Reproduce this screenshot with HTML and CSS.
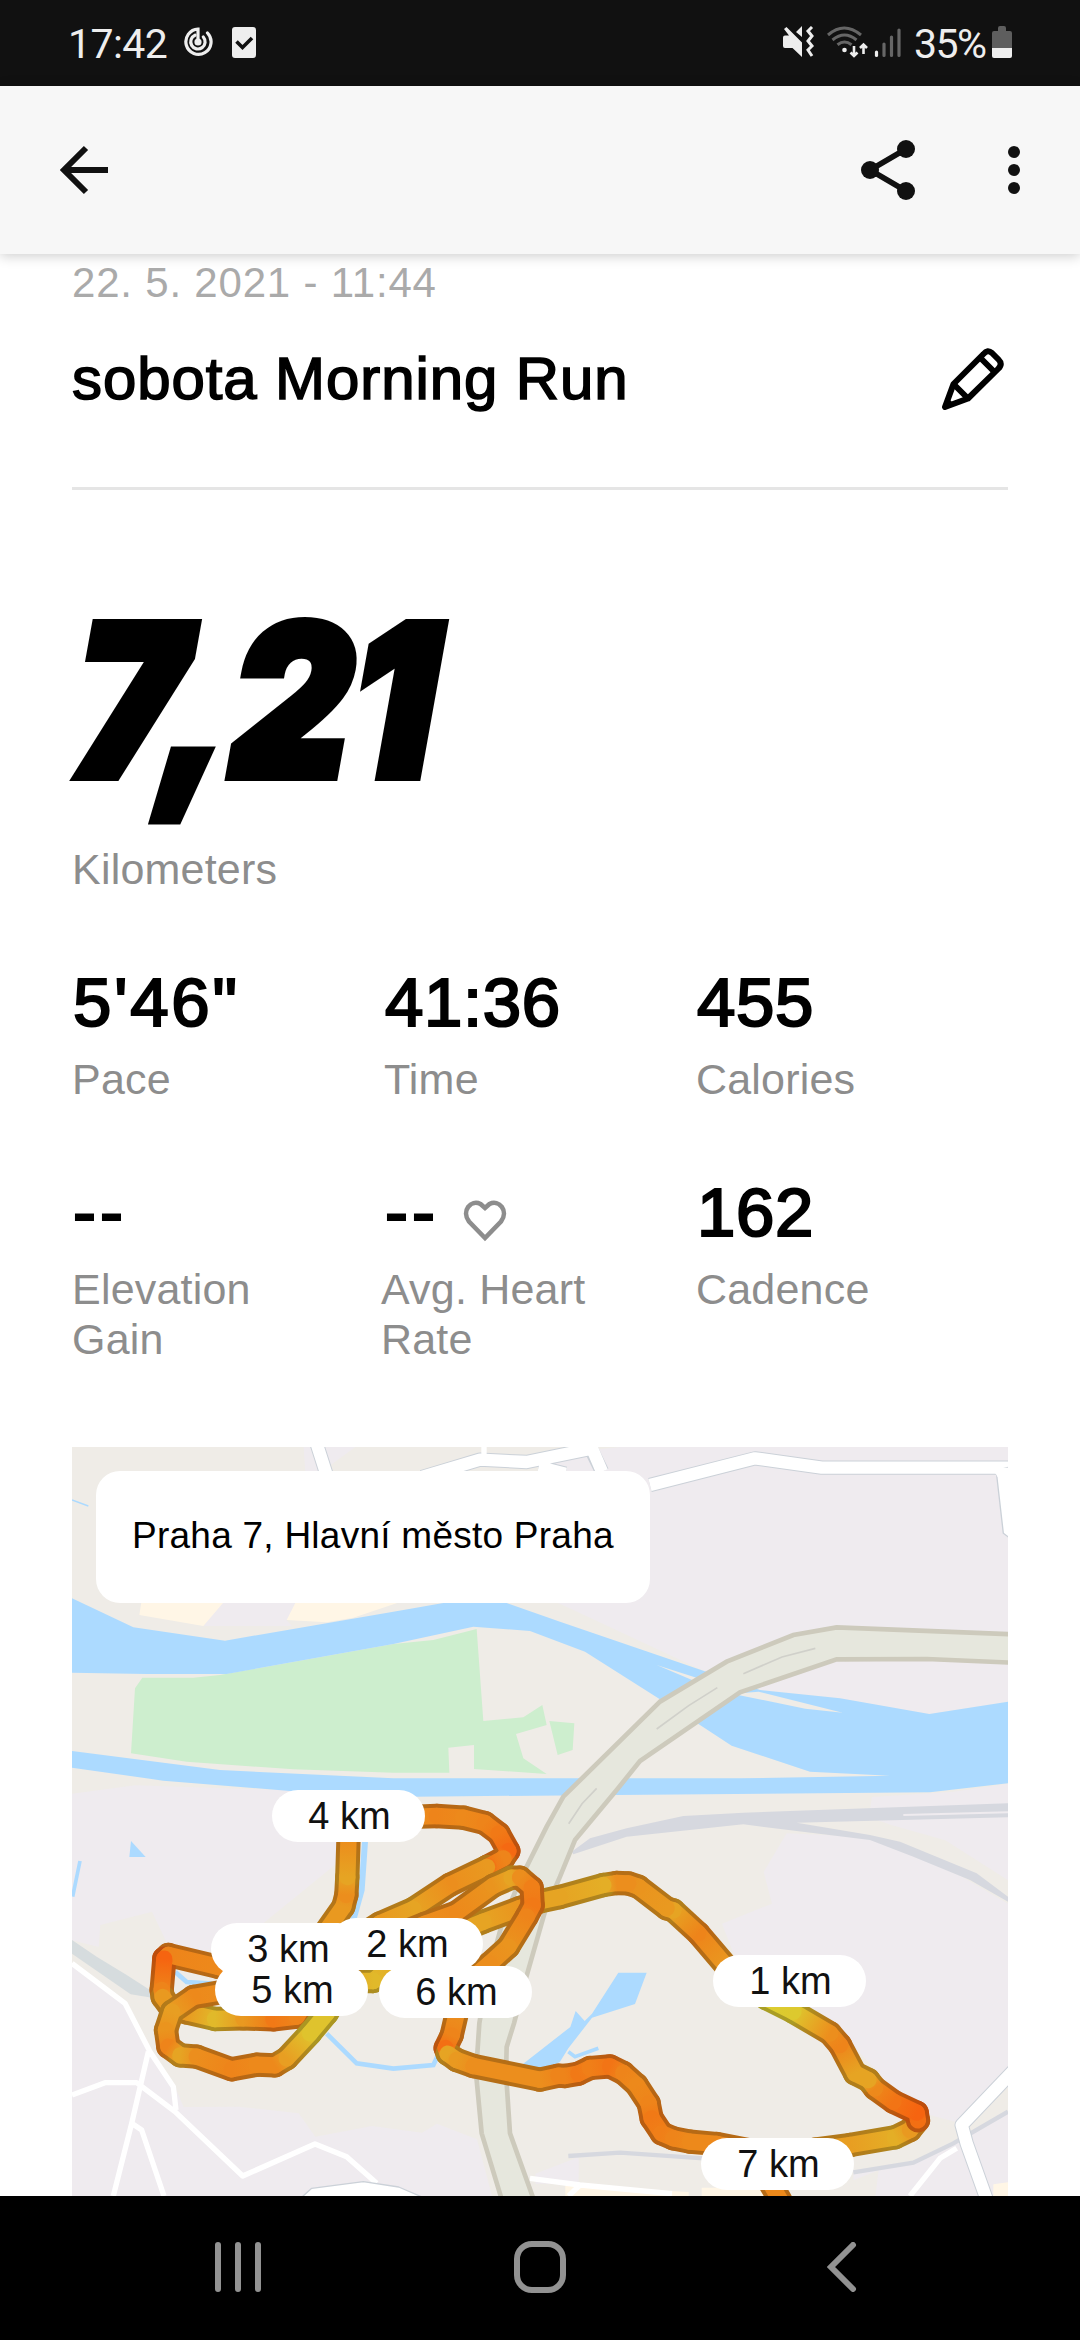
FILE: index.html
```html
<!DOCTYPE html>
<html lang="cs">
  <head>
    <meta charset="UTF-8">
    <title>sobota Morning Run</title>
    <link rel="stylesheet" href="styles.css">
  </head>

  <body>
    <div class="status-bar">
      <span class="time">17:42</span>
      <svg class="icon-record" width="30" height="30" viewBox="0 0 30 30" fill="none" stroke="#eee" stroke-width="3.2" stroke-linecap="round">
        <path d="M15 15V2.200A12.600 12.600 0 1 0 24.500 6"/>
        <path d="M12 8.200A7.200 7.200 0 1 0 20.300 10"/>
        <circle cx="15" cy="15" r="2" fill="#eee"/>
      </svg>
      <svg class="icon-check" width="24" height="31" viewBox="0 0 24 31">
        <rect width="24" height="31" rx="3" fill="#eee"/>
        <path d="M4.500 14.500l6 6L20 11" fill="none" stroke="#111" stroke-width="3.6"/>
      </svg>

      <div class="status-right">
        <svg width="32" height="32" viewBox="0 0 32 32">
          <path d="M0 11.500q0-2 2-2H6L1 3 3.500 1 19 16.500V31L9.500 22H2q-2 0-2-2zM13 6l6-6v11z" fill="#eee"/>
          <path d="M29 1l-4 4 4 5-4 5 4 5-4 4 4 6" fill="none" stroke="#eee" stroke-width="3"/>
        </svg>
        <svg class="icon-wifi" width="42" height="32" viewBox="0 0 42 32" fill="none">
          <g stroke="#666" stroke-width="3">
            <path d="M1 9q16-14 33 0"/>
            <path d="M5.500 14q12-10 24 0"/>
            <path d="M10.500 18.800q7-5.500 14 0"/>
          </g>
          <circle cx="17.500" cy="24" r="2.300" fill="#eee"/>
          <path d="M27 20v10m-3.500-3.500L27 30l3.500-3.500M36.500 28V18.500M33 22l3.500-3.500L40 22" stroke="#eee" stroke-width="2.600"/>
        </svg>
        <svg class="icon-signal" width="28" height="32" viewBox="0 0 28 32" stroke-width="3.200" stroke-linecap="round">
          <path d="M2.500 26v3.500" stroke="#eee"/>
          <path d="M10 18v11.500M17.500 11v18.500M25 4v25.500" stroke="#666"/>
        </svg>
        <span class="percent">35%</span>
        <svg width="20" height="32" viewBox="0 0 20 32">
          <path d="M0 7q0-2 2-2h4V2q0-2 2-2h4q2 0 2 2v3h4q2 0 2 2v15H0z" fill="#5e5e5e"/>
          <path d="M0 22h20v8q0 2-2 2H2q-2 0-2-2z" fill="#eee"/>
        </svg>
      </div>
    </div>

    <div class="app-bar">
      <svg width="49" height="50" viewBox="0 0 49 50" fill="none" stroke="#111" stroke-width="6">
        <path d="M48 25H5M26 3L4 25l22 22"/>
      </svg>
      <div class="actions">
        <svg width="54" height="62" viewBox="0 0 54 62" fill="#111">
          <path d="M45 10L9 31l36 21" fill="none" stroke="#111" stroke-width="5.500"/>
          <circle cx="9" cy="31" r="9"/>
          <circle cx="45" cy="10" r="9"/>
          <circle cx="45" cy="52" r="9"/>
        </svg>
        <svg width="12" height="48" viewBox="0 0 12 48" fill="#111">
          <circle cx="6" cy="6" r="6"/>
          <circle cx="6" cy="24" r="6"/>
          <circle cx="6" cy="42" r="6"/>
        </svg>
      </div>
    </div>

    <div class="content">
      <div class="date">22. 5. 2021 - 11:44</div>
      <div class="title-row">
        <h1>sobota Morning Run</h1>
        <svg width="62" height="62" viewBox="0 0 62 62" fill="none" stroke="#000" stroke-width="6" stroke-linejoin="round">
          <path d="M3 59L11.500 36 41.500 6Q45.500 1 50 5L56.500 11.500Q61 16 56 21L26 50.500z"/>
          <path d="M38 9.500L52.500 24M11.500 36L26 50.500"/>
          <path d="M3 59l3-9 6 6z" fill="#000" stroke="none"/>
        </svg>
      </div>

      <div class="distance">7,21</div>
      <div class="label">Kilometers</div>

      <div class="stats">
        <div class="stat">
          <div class="value pace">5'46"</div>
          <div class="label">Pace</div>
        </div>
        <div class="stat">
          <div class="value">41:36</div>
          <div class="label">Time</div>
        </div>
        <div class="stat">
          <div class="value">455</div>
          <div class="label">Calories</div>
        </div>
        <div class="stat">
          <div class="value empty">--</div>
          <div class="label">Elevation<br>Gain</div>
        </div>
        <div class="stat">
          <div class="value empty">--
            <svg class="heart" width="44" height="42" viewBox="0 0 44 42" fill="none" stroke="#8d8d8d" stroke-width="4.600">
              <path d="M22 38L6 21.500C-2 11 8 -1 17.500 4L22 8l4.500-4C36 -1 46 11 38 21.500z"/>
            </svg>
          </div>
          <div class="label heart-label">Avg. Heart<br>Rate</div>
        </div>
        <div class="stat">
          <div class="value">162</div>
          <div class="label">Cadence</div>
        </div>
      </div>

      <div class="map">
        <svg width="936" height="749" viewBox="0 0 2808 2247">
          <rect width="2808" height="2247" fill="#efece7"/>

          <!-- built-up areas -->
          <g fill="#efebef">
            <path d="M1644 0H2808V764L2572 801 2304 754 2064 729 1894 671 1504 489 1440 460 1380 300 1440 20z"/>
            <path d="M695 0H850L740 80H700zM454 460H700L644 520 660 537H394z"/>
            <path d="M0 1040L190 1015 660 1030 870 1160 830 1220 560 1440 350 1540 300 1520 240 1394 85 1434 80 1500 0 1480z"/>
            <path d="M0 1549L155 1670 234 1814 300 1900 335 1980 500 1979 680 1999 730 2069 900 2037 1050 2057 1095 2030 1215 2077 1260 2247H0z"/>
            <path d="M2400 1050L2644 1034 2808 1010V1300L2620 1180 2460 1135 2390 1110z"/>
            <path d="M2144 1159L2400 1170 2520 1200 2808 1370V1870L2670 2030 2560 2000 2440 1900 2300 1750 2000 1560 1950 1430 2100 1370 2075 1275z"/>
            <path d="M2344 2176L2524 2147 2644 2089 2808 1994V2247H2410L2420 2170 2344 2200z"/>
            <path d="M1390 2180L1520 2130V2210H1390z"/>
          </g>

          <g fill="#fff6e6">
            <path d="M209 460H460L394 537 202 504zM674 460H1000L844 512 764 526 644 519z"/>
            <path d="M1480 2215L1850 2235V2247H1480zM1889 2222H2090V2247H1889zM2764 2212L2808 2206V2247H2764z"/>
          </g>

          <path d="M211 692H364L444 684 964 591 1084 579 1214 546 1234 822 1354 811 1411 774 1424 834 1332 861 1354 934 1424 981 1206 966V894L1129 902 1132 977H964L664 967 344 944 177 919 189 724zM1432 822L1507 829 1502 909 1457 924z" fill="#cdeece"/>

          <!-- river, canal and ponds -->
          <g fill="#acdaff">
            <path d="M0 454L184 541 459 581 964 494 1114 468H1304L1464 524 1894 671 2064 729 2304 754 2572 801 2808 764V1009L2574 1036 1634 1044 1024 1049 654 1032 274 1001 0 962V912L444 969 964 994H2004L2454 986 2214 974 1979 896 1884 834 1759 754 1539 614 1374 552 1204 539 964 591 464 681H224L0 677z"/>
            <path d="M177 1182L221 1230H172z"/>
            <path d="M1639 1577H1724L1689 1671 1560 1712 1489 1804 1464 1844 1420 1870 1349 1854 1495 1740 1511 1692 1538 1722 1560 1700z"/>
          </g>
          <path d="M1754 654L1885 696 1862 700zM1980 740L2060 734 2312 797 2200 785z" fill="#efece7"/>
          <g fill="none" stroke="#acdaff">
            <path d="M24 1242L2 1349M1489 1814L1509 1829 1579 1804" stroke-width="11"/>
            <path d="M0 159L49 177" stroke-width="4"/>
            <path d="M879 1184L869 1329 844 1419" stroke-width="18"/>
            <path d="M310 1575L344 1605 420 1610M764 1760L854 1849 964 1865 1084 1854 1110 1800" stroke-width="14"/>
          </g>

          <!-- railways -->
          <path d="M0 1479L74 1529 164 1584 234 1629 240 1652 176 1642 0 1520z" fill="#d6dcde"/>
          <path d="M1499 1214L1554 1174 1664 1144 1834 1107 2014 1097 2808 1069V1111L2174 1127 2394 1164 2484 1184 2714 1279 2808 1349V1364L2694 1299 2524 1229 2394 1179 2014 1132 1664 1169 1504 1222z" fill="#d6d8df"/>
          <path d="M2494 1104L2808 1096" fill="none" stroke="#efebef" stroke-width="6"/>
          <path d="M1489 2127L1644 2117 1894 2134M2344 2176L2524 2147 2644 2089 2808 1994" fill="none" stroke="#d6d8df" stroke-width="13"/>

          <!-- streets: grey casing, then white -->
          <g fill="none" stroke-linejoin="round">
            <path d="M1050 90L1224 38 1364 45 1554 6M1554 0L1590 74M1400 60L1480 80M1734 114L2049 34 2249 62H2808M734 -10L766 90M2830 1865L2669 2034 2684 2089 2745 2260" stroke="#cbd1d8" stroke-width="43"/>
            <path d="M1050 90L1224 38 1364 45 1554 6M1554 -10L1590 74M1400 60L1480 80M1734 114L2049 34 2249 62H2808M734 -10L766 90M2830 1865L2669 2034 2684 2089 2745 2260" stroke="#fff" stroke-width="37"/>
            <path d="M1236 0V30M0 1549L159 1669 234 1814 304 1919 312 1989M0 1944L99 1907H194L309 1994 512 2187 729 2091 824 2129 914 2209M229 1814L179 2029 124 2247M179 2029L209 2049 276 2247M2654 2104L2604 2134 2514 2247M1374 2194L1524 2214 1800 2240M1524 2214L1490 2247" stroke="#fff" stroke-width="16"/>
            <path d="M2774 84L2794 259 2812 272V60L2774 70zM690 2250L719 2224 874 2204 980 2220 1050 2250z" fill="#fff" stroke="#cbd1d8" stroke-width="4"/>
            <path d="M2760 62H2808V90H2777z" fill="#fff"/>
          </g>

          <!-- motorway -->
          <path d="M2820 562L2294 541 2164 564 1964 644 1764 764 1474 1049 1424 1139 1344 1299 1290 1430 1244 1600 1222 1729 1212 1879 1229 2059 1290 2260H1386L1314 2059 1302 1879 1304 1800 1326 1729 1360 1600 1420 1390 1464 1289 1509 1179 1634 1029 1704 942 2004 736 2294 637 2564 636 2820 647z" fill="#e6e7dd" stroke="#cdcabc" stroke-width="14"/>
          <path d="M2230 604L2130 630 2014 680M1936 722L1850 776 1754 846M1574 1024L1530 1070 1490 1130" fill="none" stroke="#d0d0ca" stroke-width="5"/>

          <g id="route"></g>
        </svg>

        <div class="place">Praha 7, Hlavní město Praha</div>
        <div class="km km-1">1 km</div>
        <div class="km km-3">3 km</div>
        <div class="km km-2">2 km</div>
        <div class="km km-4">4 km</div>
        <div class="km km-5">5 km</div>
        <div class="km km-6">6 km</div>
        <div class="km km-7">7 km</div>
      </div>
    </div>

    <div class="nav-bar">
      <svg width="48" height="50" viewBox="0 0 48 50" stroke="#929292" stroke-width="6" stroke-linecap="round">
        <path d="M4 3v44M24 3v44M44 3v44"/>
      </svg>
      <svg class="home" width="52" height="52" viewBox="0 0 52 52" fill="none" stroke="#929292" stroke-width="6">
        <rect x="3" y="3" width="46" height="46" rx="15"/>
      </svg>
      <svg width="30" height="50" viewBox="0 0 30 50" fill="none" stroke="#929292" stroke-width="6" stroke-linecap="round">
        <path d="M26 3L4 25l22 22"/>
      </svg>
    </div>

    <script src="route.js"></script>
  </body>
</html>
```
FILE: styles.css
```css
body {
  margin: 0;
  width: 1080px;
  height: 2340px;
  overflow: hidden;
  display: flex;
  flex-direction: column;
  background: #fff;
  color: #000;
  font-family: "Liberation Sans", Arial, sans-serif;
}

svg {
  display: block;
  flex: none;
}

.status-bar {
  box-sizing: border-box;
  flex: none;
  height: 86px;
  padding: 0 68px 2px 68px;
  display: flex;
  align-items: center;
  background: #111;
  color: #eee;
  font-family: Roboto, sans-serif;
  font-size: 41px;
}

.time {
  width: 115px;
  padding-top: 4px;
  letter-spacing: -0.6px;
}

.icon-check {
  margin-left: 19px;
}

.status-right {
  margin-left: auto;
  display: flex;
  align-items: center;
}

.icon-wifi {
  margin-left: 12px;
}

.icon-signal {
  margin-left: 5px;
}

.percent {
  width: 78px;
  margin-left: 12px;
  padding-top: 4px;
  letter-spacing: -1.6px;
}

.app-bar {
  box-sizing: border-box;
  flex: none;
  height: 168px;
  padding: 0 60px;
  display: flex;
  align-items: center;
  justify-content: space-between;
  background: #f7f7f7;
  box-shadow: 0 2px 12px rgba(0, 0, 0, 0.2);
}

.actions {
  display: flex;
  align-items: center;
  gap: 93px;
}

.content {
  box-sizing: border-box;
  flex: none;
  height: 1942px;
  padding: 9px 72px 0;
}

.date {
  line-height: 40px;
  font-size: 42px;
  color: #aaa;
  letter-spacing: 0.8px;
}

.title-row {
  display: flex;
  align-items: center;
  justify-content: space-between;
  margin-top: 41px;
  padding: 0 4px 73px 0;
  border-bottom: 3px solid #e5e5e5;
}

.title-row h1 {
  margin: 0;
  font-size: 60px;
  line-height: 70px;
  font-weight: normal;
  letter-spacing: 0.9px;
  -webkit-text-stroke: 1.6px #000;
}

.distance {
  margin: 130px 0 0 -6px;
  padding-left: 10px;
  font-family: Inter, sans-serif;
  font-size: 209px;
  line-height: 160px;
  font-weight: 900;
  font-style: italic;
  -webkit-text-stroke: 10px #000;
  transform: scaleX(0.89) skewX(-2deg);
  transform-origin: left;
}

.label {
  font-size: 43px;
  line-height: 50px;
  letter-spacing: 0.2px;
  color: #8d8d8d;
}

.distance + .label {
  margin-top: 64px;
}

.stats {
  display: grid;
  grid-template-columns: repeat(3, 312px);
  row-gap: 69px;
  margin-top: 69px;
}

.value {
  display: flex;
  align-items: center;
  margin: 0 0 11px 1px;
  font-size: 69px;
  line-height: 80px;
  letter-spacing: 0.6px;
  -webkit-text-stroke: 2.2px #000;
}

.pace {
  letter-spacing: 2.8px;
}

.empty {
  letter-spacing: 4px;
}

.heart {
  margin: 16px 0 0 24px;
}

.heart-label {
  margin-left: -3px;
}

.map {
  position: relative;
  height: 749px;
  margin-top: 83px;
  overflow: hidden;
}

.place {
  position: absolute;
  left: 24px;
  top: 24px;
  box-sizing: border-box;
  width: 554px;
  height: 132px;
  padding-left: 36px;
  border-radius: 24px;
  background: #fff;
  font-size: 37px;
  line-height: 129px;
  letter-spacing: 0.25px;
  white-space: nowrap;
}

.km {
  position: absolute;
  width: 153px;
  height: 52px;
  border-radius: 26px;
  background: #fff;
  color: #111;
  font-size: 38px;
  line-height: 53px;
  text-align: center;
  text-indent: 2px;
}

.km-1 { left: 641px; top: 508px; }
.km-2 { left: 258px; top: 471px; }
.km-3 { left: 139px; top: 476px; }
.km-4 { left: 200px; top: 343px; }
.km-5 { left: 143px; top: 517px; }
.km-6 { left: 307px; top: 519px; }
.km-7 { left: 629px; top: 691px; }

.nav-bar {
  box-sizing: border-box;
  flex: none;
  height: 144px;
  padding: 0 0 2px 214px;
  display: flex;
  align-items: center;
  background: #000;
}

.home {
  margin: 0 261px 0 252px;
}
```
FILE: route.js
```javascript
// every point is x, y, speed (0 = slow/red, 1 = fast/yellow)
const parts = [
  // start -> 1 km -> 2 km
  [[2125, 2260, .35], [2084, 2190, .35], [2064, 2140, .4], [2230, 2108, .5], [2334, 2094, .55], [2469, 2071, .7], [2514, 2049, .5], [2538, 2020, .45]],
  [[2538, 2020, .1], [2534, 1997, 0], [2464, 1964, .15], [2409, 1924, .35], [2389, 1899, .6], [2349, 1879, .6], [2304, 1794, .3], [2274, 1759, .4], [2164, 1694, .95], [2084, 1654, 1], [1964, 1559, .5], [1879, 1459, .3], [1804, 1390, .6], [1784, 1384, .5], [1699, 1319, .45], [1669, 1309, .4], [1634, 1308, .4], [1594, 1314, .7], [1464, 1350, .6], [1404, 1363, .6], [1344, 1383, .45], [1234, 1424, .6], [1000, 1520, .6], [904, 1602, .8], [824, 1602, .6]],
  // western loop, 3 km
  [[820, 1560, .5], [480, 1570, .35], [440, 1560, .35], [289, 1524, .3], [277, 1535, 0], [269, 1629, .3], [272, 1650, .5], [294, 1680, .5], [344, 1696, .5], [429, 1716, .8], [514, 1714, .5], [604, 1717, .2], [674, 1709, .3], [724, 1629, .5], [900, 1500, .5]],
  [[480, 1630, .4], [364, 1650, .35], [300, 1694, .55], [282, 1749, .45], [289, 1799, .3], [325, 1825, .6], [374, 1829, .4], [479, 1867, .3], [554, 1853, .35], [609, 1855, .35], [644, 1834, .55], [714, 1759, .9], [764, 1699, .9], [800, 1640, .9]],
  // 4 km
  [[750, 1470, .5], [814, 1379, .5], [823, 1344, .4], [826, 1290, .6], [830, 1160, .35]],
  [[1040, 1109, .4], [1094, 1107, .3], [1174, 1112, .35], [1238, 1128, .3], [1280, 1160, .2], [1309, 1212, .05], [1294, 1234, .3], [1249, 1258, .15], [1245, 1260, .5], [1134, 1313, .4], [1024, 1386, .6], [924, 1429, .5], [860, 1470, .5]],
  // 5 km -> 6 km
  [[1010, 1450, .4], [1060, 1430, .4], [1154, 1396, .35], [1264, 1316, .45], [1319, 1292, .6], [1344, 1292, .4], [1379, 1322, .25], [1382, 1375, .2], [1364, 1409, .3], [1309, 1499, .45], [1254, 1549, .4], [1170, 1620, .4]],
  [[1154, 1700, .4], [1139, 1765, .3], [1121, 1803, .1], [1127, 1820, .6], [1154, 1839, .5], [1204, 1857, .4], [1404, 1898, .4], [1459, 1886, .3], [1479, 1887, .3], [1519, 1880, .2], [1554, 1863, .25], [1614, 1858, .15], [1654, 1878, .3], [1694, 1914, .35], [1730, 1969, .3], [1739, 2014, .2], [1769, 2059, .25], [1804, 2074, .3], [1854, 2084, .35], [1934, 2091, .35], [2034, 2110, .35]]
];

const route = document.getElementById("route");
let count = 0;

function add(tag, attrs, parent) {
  const el = document.createElementNS("http://www.w3.org/2000/svg", tag);
  for (const name in attrs) el.setAttribute(name, attrs[name]);
  return parent.appendChild(el);
}

function color(t, shade) {
  const rgb = [246 - 26 * t, 100 + 106 * t, 16 + 32 * t];
  return "rgb(" + rgb.map(c => Math.round(c * shade)).join(",") + ")";
}

function drawPart(points, width, shade) {
  for (let i = 1; i < points.length; i++) {
    const [x1, y1, t1] = points[i - 1];
    const [x2, y2, t2] = points[i];
    const id = "speed" + count++;
    const grad = add("linearGradient", { id, gradientUnits: "userSpaceOnUse", x1, y1, x2, y2 }, route);
    add("stop", { offset: 0, "stop-color": color(t1, shade) }, grad);
    add("stop", { offset: 1, "stop-color": color(t2, shade) }, grad);
    add("path", {
      d: `M${x1} ${y1}L${x2} ${y2}`,
      stroke: `url(#${id})`,
      "stroke-width": width,
      "stroke-linecap": "round"
    }, route);
  }
}

parts.forEach(points => {
  drawPart(points, 73, 0.77);
  drawPart(points, 49, 1);
});
```
